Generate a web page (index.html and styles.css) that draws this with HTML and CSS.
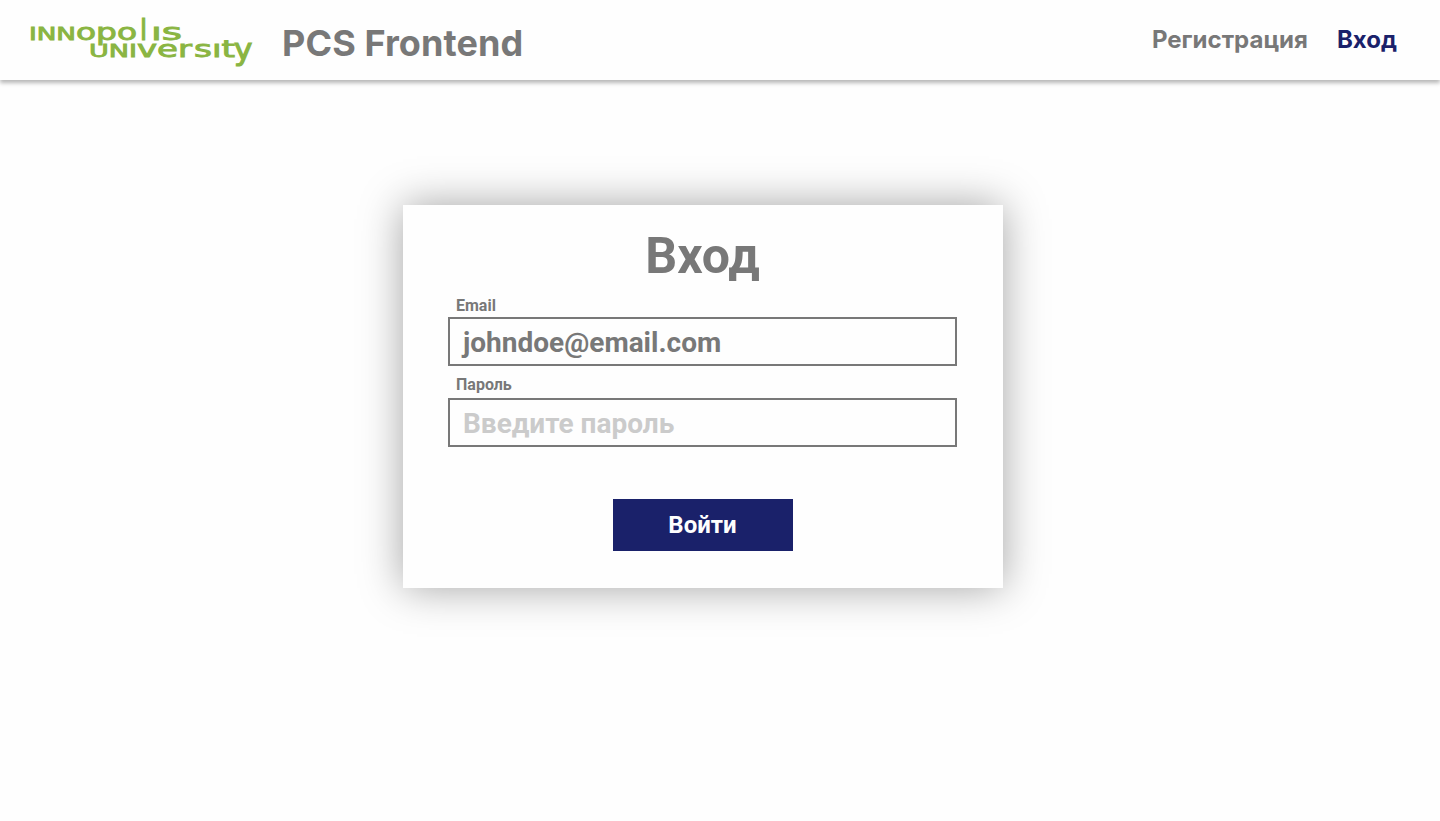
FILE: index.html
```html
<!DOCTYPE html>
<html lang="ru">
<head>
<meta charset="utf-8">
<title>PCS Frontend</title>
<link rel="stylesheet" href="styles.css">
</head>
<body>
<header class="header">
  <svg class="logo" width="224" height="54" viewBox="0 0 224 54" role="img" aria-label="Innopolis University">
    <text class="logo-caps" x="0" y="25" textLength="47" lengthAdjust="spacingAndGlyphs">INN</text>
    <text class="logo-low" x="47" y="25" textLength="61" lengthAdjust="spacingAndGlyphs">opo</text>
    <text class="logo-low" transform="translate(111 25) scale(1.1 1.25)">l</text>
    <text class="logo-low" x="122" y="25" textLength="31" lengthAdjust="spacingAndGlyphs">ıs</text>
    <text class="logo-caps" x="60" y="42" textLength="48" lengthAdjust="spacingAndGlyphs">UNI</text>
    <text class="logo-low" x="108" y="42" textLength="55" lengthAdjust="spacingAndGlyphs">ver</text>
    <text class="logo-low" x="165" y="42" textLength="41" lengthAdjust="spacingAndGlyphs">sıt</text>
    <text class="logo-low" transform="translate(205 45) scale(1.35 1.3)">y</text>
  </svg>
  <h1 class="title">PCS Frontend</h1>
  <nav class="nav">
    <a class="nav-link">Регистрация</a>
    <a class="nav-link nav-active">Вход</a>
  </nav>
</header>
<main class="main">
  <form class="card">
    <h2 class="heading">Вход</h2>
    <label class="label" for="email">Email</label>
    <input class="input" id="email" type="text" value="johndoe@email.com">
    <label class="label label-password" for="password">Пароль</label>
    <input class="input" id="password" type="password" placeholder="Введите пароль">
    <button class="button" type="button">Войти</button>
  </form>
</main>
</body>
</html>
```
FILE: styles.css
```css
* { box-sizing: border-box; }
body {
  margin: 0;
  min-height: 821px;
  background: #fefefe;
  color: #787878;
  font-family: Roboto, sans-serif;
}
.header {
  display: flex;
  height: 80px;
  padding: 15px 43px 0 29px;
  background: #fefefe;
  box-shadow: 0 3px 4px rgba(0, 0, 0, .28);
  font-family: Inter, sans-serif;
}
.logo {
  flex: none;
  overflow: visible;
  fill: #8ab542;
  stroke: #8ab542;
  stroke-width: .9px;
}
.logo-caps { font: 400 18px "DejaVu Sans", sans-serif; }
.logo-low { font: 400 23px "DejaVu Sans", sans-serif; }
.title {
  margin: 6px 0 0 29px;
  font-size: 36px;
  line-height: 44px;
  font-weight: 700;
  letter-spacing: .1px;
}
.nav { display: flex; gap: 29px; margin-left: auto; padding-top: 10px; }
.nav-link { font-size: 24px; line-height: 29px; font-weight: 700; }
.nav-active { color: #1a216a; }
.main { padding-top: 125px; padding-left: 403px; }
.card {
  display: flex;
  flex-direction: column;
  width: 600px;
  height: 383px;
  padding: 22px 46px 0 45px;
  background: #fefefe;
  box-shadow: 0 0 40px rgba(0, 0, 0, .36);
}
.heading {
  margin: 0;
  text-align: center;
  font-size: 50px;
  line-height: 59px;
  font-weight: 700;
}
.label {
  height: 19px;
  margin: 10px 0 2px 8px;
  font-size: 16px;
  line-height: 19px;
  font-weight: 700;
}
.label-password { margin: 9px 0 4px 8px; }
.input {
  width: 509px;
  height: 49px;
  padding: 1px 8px 0;
  border: 2px solid #787878;
  border-radius: 0;
  background: #fefefe;
  color: #787878;
  font: 700 28px Roboto, sans-serif;
  text-indent: 5px;
}
.input::placeholder { color: #cbcbcb; opacity: 1; }
.button {
  align-self: center;
  width: 180px;
  height: 52px;
  margin-top: 52px;
  border: 0;
  background: #1a216a;
  color: #fefefe;
  font: 700 24px Roboto, sans-serif;
}
```
